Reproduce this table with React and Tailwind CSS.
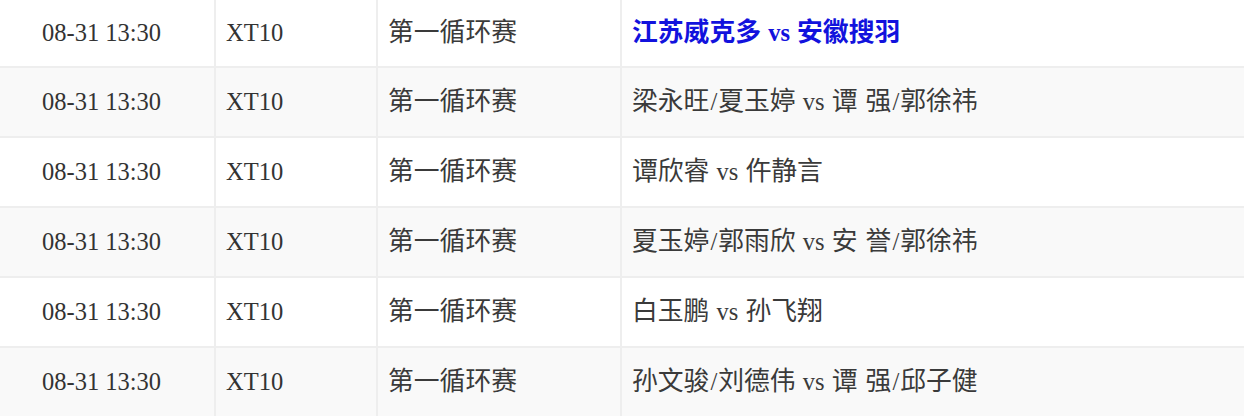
const rows = [
  { time: "08-31 13:30", table: "XT10", round: "第一循环赛", match: "江苏威克多 vs 安徽搜羽", team: true },
  { time: "08-31 13:30", table: "XT10", round: "第一循环赛", match: "梁永旺/夏玉婷 vs 谭 强/郭徐祎" },
  { time: "08-31 13:30", table: "XT10", round: "第一循环赛", match: "谭欣睿 vs 仵静言" },
  { time: "08-31 13:30", table: "XT10", round: "第一循环赛", match: "夏玉婷/郭雨欣 vs 安 誉/郭徐祎" },
  { time: "08-31 13:30", table: "XT10", round: "第一循环赛", match: "白玉鹏 vs 孙飞翔" },
  { time: "08-31 13:30", table: "XT10", round: "第一循环赛", match: "孙文骏/刘德伟 vs 谭 强/邱子健" },
];

// CJK glyphs in the source render a bit larger than the latin serif
function Mixed({ text }) {
  const parts = text.split(/([\u4e00-\u9fff]+)/).filter(Boolean);
  return (
    <span>
      {parts.map((p, i) =>
        /[\u4e00-\u9fff]/.test(p) ? (
          <span key={i} className="text-[25.8px]">{p}</span>
        ) : (
          <span key={i} className="px-[1px]">{p}</span>
        )
      )}
    </span>
  );
}

export default function App() {
  return (
    <div
      className="w-[1244px] h-[416px] overflow-hidden bg-white text-[24.5px] text-[#333]"
      style={{ fontFamily: '"Liberation Serif", "Noto Sans CJK SC", serif' }}
    >
      {rows.map((r, i) => (
        <div
          key={i}
          className={`flex ${i === 0 ? "h-[66px]" : "h-[70px] border-t-2 border-[#eeeeee]"} ${
            i % 2 === 1 ? "bg-[#f9f9f9]" : "bg-white"
          }`}
        >
          <div className="w-[214px] flex items-center pl-[42px]">{r.time}</div>
          <div className="w-[162px] flex items-center pl-[10px] border-l-2 border-[#eeeeee]">{r.table}</div>
          <div className="w-[244px] flex items-center pl-[10px] border-l-2 border-[#eeeeee] text-[#3a3a3a]">
            <Mixed text={r.round} />
          </div>
          <div
            className={`flex-1 flex items-center pl-[10px] border-l-2 border-[#eeeeee] ${
              r.team ? "font-bold text-[#1212dd]" : "text-[#3a3a3a]"
            }`}
          >
            <Mixed text={r.match} />
          </div>
        </div>
      ))}
    </div>
  );
}
